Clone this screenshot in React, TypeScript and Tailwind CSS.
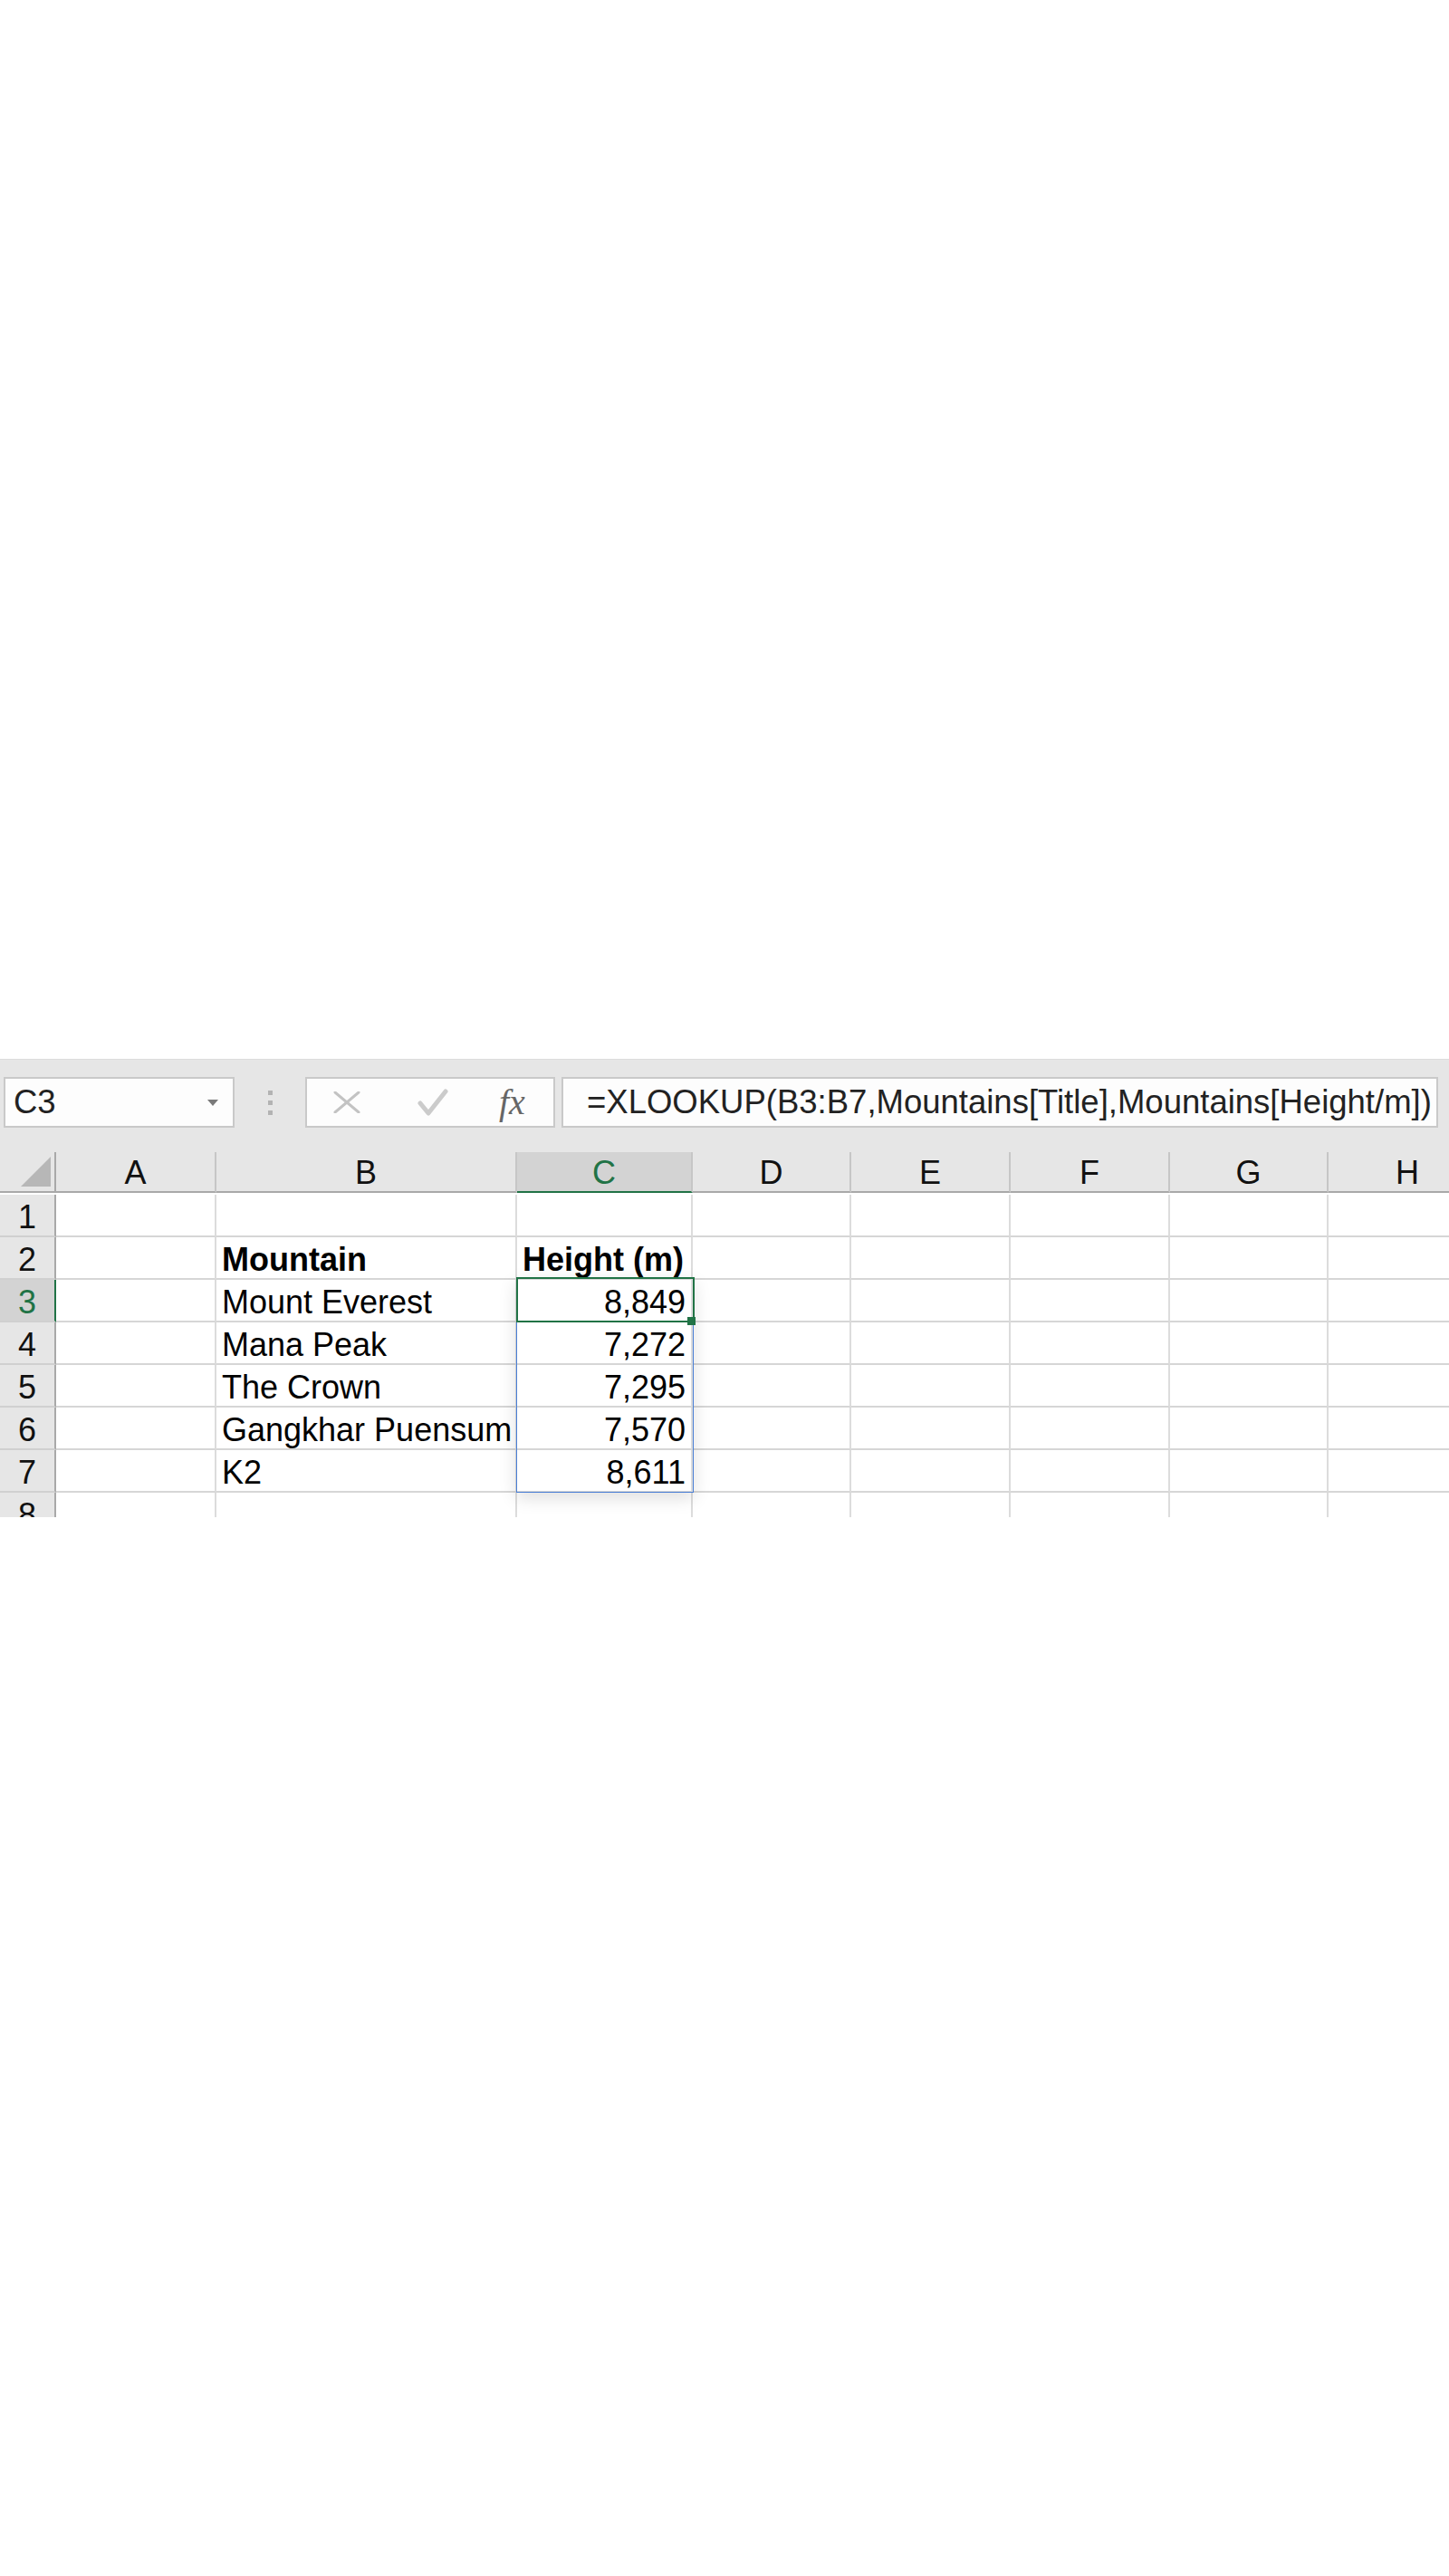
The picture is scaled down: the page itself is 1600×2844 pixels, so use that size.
import React from "react";

const FONT = { fontFamily: "'Liberation Sans', Arial, sans-serif" };

const cols = ["A", "B", "C", "D", "E", "F", "G", "H"];

type Row = { n: number; b?: string; c?: string; bold?: boolean };
const rows: Row[] = [
  { n: 1 },
  { n: 2, b: "Mountain", c: "Height (m)", bold: true },
  { n: 3, b: "Mount Everest", c: "8,849" },
  { n: 4, b: "Mana Peak", c: "7,272" },
  { n: 5, b: "The Crown", c: "7,295" },
  { n: 6, b: "Gangkhar Puensum", c: "7,570" },
  { n: 7, b: "K2", c: "8,611" },
  { n: 8 },
];

function Toolbar() {
  return (
    <div className="flex h-[103px] items-start bg-[#e6e6e6] pt-[19px] border-t border-[#dcdcdc]">
      {/* Name box */}
      <div className="ml-[4px] flex h-[56px] w-[255px] items-center justify-between border-2 border-[#c9c9c9] bg-[#fdfdfd] pl-[9px] pr-[16px]">
        <span className="text-[36.5px] leading-none text-[#222]">C3</span>
        <svg width="12" height="7" viewBox="0 0 12 7">
          <polygon points="0,0 12,0 6,7" fill="#7a7a7a" />
        </svg>
      </div>
      {/* dots */}
      <div className="flex h-[56px] w-[78px] flex-col items-center justify-center gap-[6px]">
        <div className="h-[5px] w-[5px] bg-[#b3b3b3]" />
        <div className="h-[5px] w-[5px] bg-[#b3b3b3]" />
        <div className="h-[5px] w-[5px] bg-[#b3b3b3]" />
      </div>
      {/* fx box */}
      <div className="flex h-[56px] w-[276px] items-center border-2 border-[#c9c9c9] bg-[#fdfdfd] pl-[29px]">
        <svg width="30" height="24" viewBox="0 0 30 24">
          <path d="M2 1 L28 23 M28 1 L2 23" stroke="#c3c3c3" strokeWidth="3" strokeLinecap="round" />
        </svg>
        <svg className="ml-[63px]" width="34" height="30" viewBox="0 0 34 30">
          <path d="M3 16 L12 27 L31 3" stroke="#cbcbcb" strokeWidth="5" fill="none" strokeLinecap="round" strokeLinejoin="round" />
        </svg>
        <span
          className="ml-[56px] text-[40px] italic leading-none text-[#666]"
          style={{ fontFamily: "'Liberation Serif', 'Times New Roman', serif" }}
        >
          fx
        </span>
      </div>
      {/* formula box */}
      <div className="ml-[7px] flex h-[56px] w-[968px] items-center border-2 border-[#c9c9c9] bg-[#fdfdfd] pl-[26px]">
        <span className="whitespace-nowrap text-[36.5px] leading-none text-[#222]">
          =XLOOKUP(B3:B7,Mountains[Title],Mountains[Height/m])
        </span>
      </div>
    </div>
  );
}

function Grid() {
  return (
    <div className="relative h-[403px] w-[1600px] overflow-hidden bg-white">
      <div className="grid w-[1643px] grid-cols-[62px_177px_332px_194px_175px_176px_176px_175px_176px] auto-rows-[47px]">
        {/* header row */}
        <div className="h-[45px] border-b-2 border-r-2 border-b-[#a9a9a9] border-r-[#a9a9a9] bg-[#e6e6e6] flex items-end justify-end pb-[5px] pr-[4px]">
          <svg width="33" height="33" viewBox="0 0 33 33">
            <polygon points="33,0 33,33 0,33" fill="#b7b7b7" />
          </svg>
        </div>
        {cols.map((c) => {
          const sel = c === "C";
          return (
            <div
              key={c}
              className={
                sel
                  ? "flex h-[45px] items-center justify-center border-b-2 border-r-2 border-b-[#217346] border-r-[#c6c6c6] bg-[#d3d3d3] pt-[2px] text-[36px] text-[#217346]"
                  : "flex h-[45px] items-center justify-center border-b-2 border-r-2 border-b-[#a9a9a9] border-r-[#c6c6c6] bg-[#e6e6e6] pt-[2px] text-[36px] text-[#111]"
              }
            >
              {c}
            </div>
          );
        })}
        {rows.map((r) => {
          const sel = r.n === 3;
          return (
            <React.Fragment key={r.n}>
              <div
                className={
                  sel
                    ? "flex items-center justify-center border-b-2 border-r-2 border-b-[#d0d0d0] border-r-[#217346] bg-[#d3d3d3] pt-[4px] text-[36px] text-[#217346]"
                    : "flex items-center justify-center border-b-2 border-r-2 border-b-[#d0d0d0] border-r-[#a9a9a9] bg-[#e6e6e6] pt-[4px] text-[36px] text-[#111]"
                }
              >
                {r.n}
              </div>
              {cols.map((c) => {
                let content: React.ReactNode = null;
                let align = "justify-start pl-[6px]";
                if (c === "B" && r.b) content = r.b;
                if (c === "C" && r.c) {
                  content = r.c;
                  align = r.bold ? "justify-start pl-[6px]" : "justify-end pr-[6px]";
                }
                return (
                  <div
                    key={c}
                    className={`flex items-center whitespace-nowrap border-b-2 border-r-2 border-b-[#d6d6d6] border-r-[#dcdcdc] pt-[4px] text-[36px] text-black ${align} ${
                      r.bold ? "font-bold" : ""
                    }`}
                  >
                    {content}
                  </div>
                );
              })}
            </React.Fragment>
          );
        })}
      </div>
      {/* spill range */}
      <div className="absolute left-[570px] top-[138px] h-[238px] w-[196px] border-[1.5px] border-[#4a7fd6] shadow-[0_6px_18px_rgba(0,0,0,0.13)]" />
      {/* active cell */}
      <div className="absolute left-[570px] top-[138px] h-[50px] w-[197px] border-2 border-[#217346]" />
      <div className="absolute left-[759px] top-[182px] h-[9px] w-[9px] bg-[#217346]" />
    </div>
  );
}

export default function App() {
  return (
    <div className="flex h-[2844px] w-[1600px] flex-col overflow-hidden bg-white" style={FONT}>
      <div className="h-[1169px] shrink-0" />
      <Toolbar />
      <Grid />
      <div className="flex-1" />
    </div>
  );
}
